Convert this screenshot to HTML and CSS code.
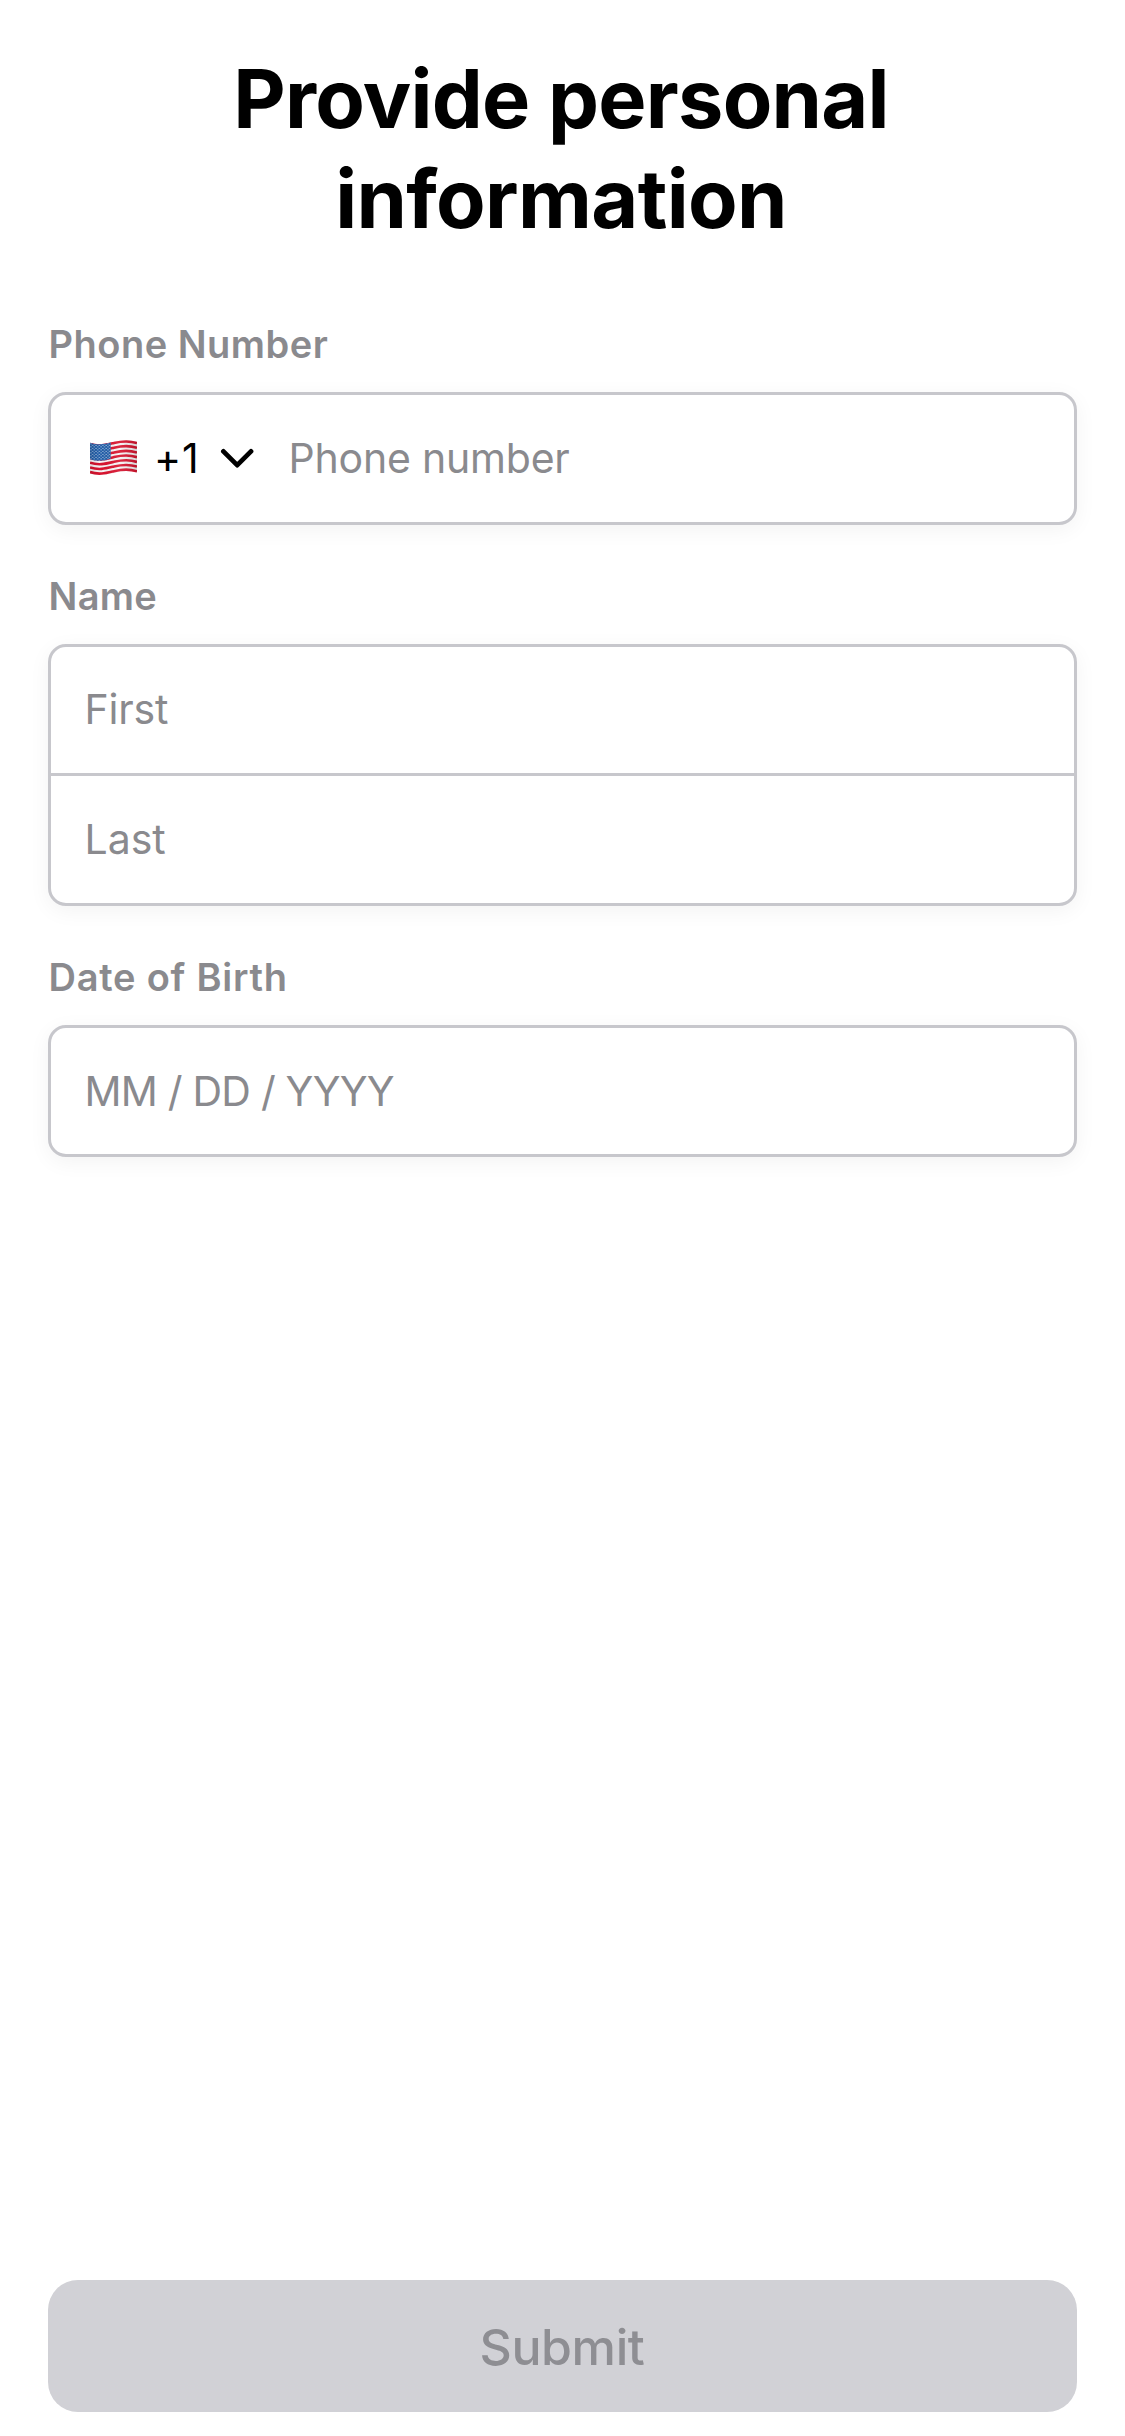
FILE: index.html
```html
<!DOCTYPE html>
<html lang="en">
<head>
<meta charset="utf-8">
<title>Provide personal information</title>
<link rel="stylesheet" href="styles.css">
</head>
<body>
<main class="screen">
  <h1 class="title"><span class="title-wide">Provide personal</span><br>information</h1>

  <section class="group">
    <div class="label label-phone">Phone Number</div>
    <div class="box">
      <div class="row row-phone">
        <svg class="flag" width="47" height="36" viewBox="0 0 47 36" aria-hidden="true">
          <defs>
            <path id="wave" d="M0 0C9 3 16 1 24 -.9S39 -3.4 47 -.8"/>
            <pattern id="stars" width="3.4" height="3" patternUnits="userSpaceOnUse">
              <circle cx=".9" cy=".8" r=".62" fill="#c3d7ec"/>
              <circle cx="2.6" cy="2.3" r=".62" fill="#c3d7ec"/>
            </pattern>
            <linearGradient id="shade" x1="0" y1="0" x2="1" y2="0">
              <stop offset="0" stop-color="#000" stop-opacity=".1"/>
              <stop offset=".22" stop-color="#000" stop-opacity="0"/>
              <stop offset=".6" stop-color="#fff" stop-opacity=".08"/>
              <stop offset="1" stop-color="#000" stop-opacity=".14"/>
            </linearGradient>
          </defs>
          <path d="M0 2.7C9 5.7 16 3.7 24 1.8S39 -.7 47 1.9V32.6C39 30 32 31.1 24 33S9 36.4 0 33.4Z" fill="#f6f3f4"/>
          <g fill="none" stroke="#d8142f" stroke-width="2.6">
            <use href="#wave" y="3.9"/>
            <use href="#wave" y="8.6"/>
            <use href="#wave" y="13.3"/>
            <use href="#wave" y="18"/>
            <use href="#wave" y="22.7"/>
            <use href="#wave" y="27.4"/>
            <use href="#wave" y="32.1"/>
          </g>
          <path d="M0 2.7C8 5.2 14 4.2 20.7 2.6V18.7C14 20.8 8 21.7 0 19.2Z" fill="#1f5ba6"/>
          <path d="M0 2.7C8 5.2 14 4.2 20.7 2.6V18.7C14 20.8 8 21.7 0 19.2Z" fill="url(#stars)"/>
          <path d="M0 2.7C9 5.7 16 3.7 24 1.8S39 -.7 47 1.9V32.6C39 30 32 31.1 24 33S9 36.4 0 33.4Z" fill="url(#shade)"/>
        </svg>
        <span class="code">+1</span>
        <svg class="chevron" width="34" height="20" viewBox="0 0 34 20" aria-hidden="true">
          <path d="M3.4 3.4L17.2 17.1L31 3.4"/>
        </svg>
        <span class="hint hint-phone">Phone number</span>
      </div>
    </div>
  </section>

  <section class="group">
    <div class="label label-name">Name</div>
    <div class="box">
      <div class="row row-first"><span class="hint hint-first">First</span></div>
      <div class="row row-last"><span class="hint">Last</span></div>
    </div>
  </section>

  <section class="group">
    <div class="label label-birth">Date of Birth</div>
    <div class="box">
      <div class="row"><span class="hint hint-date">MM / DD / YYYY</span></div>
    </div>
  </section>

  <button class="submit" type="button" disabled>Submit</button>
</main>
</body>
</html>
```
FILE: styles.css
```css
* {
  box-sizing: border-box;
}

body {
  margin: 0;
  background: #fff;
  font-family: Inter, "Liberation Sans", sans-serif;
}

.screen {
  display: flex;
  flex-direction: column;
  height: 2436px;
  padding: 49px 48px 24px;
}

.title {
  margin: 0 0 24px;
  padding-right: 3px;
  color: #000;
  font-size: 81px;
  font-weight: 700;
  line-height: 100px;
  letter-spacing: -0.65px;
  text-align: center;
}

.title-wide {
  letter-spacing: -0.75px;
}

.group {
  padding-top: 47px;
}

.label {
  height: 72px;
  padding-left: 0.5px;
  color: #8a8a8e;
  font-size: 38px;
  font-weight: 600;
  line-height: 48px;
}

.label-phone { letter-spacing: 0.5px; }
.label-name { letter-spacing: 0.3px; }
.label-birth { letter-spacing: 0.76px; }

.box {
  border: 3px solid #c7c7cc;
  border-radius: 18px;
  background: #fff;
  box-shadow: 0 5px 21px rgba(0, 0, 0, 0.05);
}

.row {
  display: flex;
  align-items: center;
  height: 126px;
  padding-left: 33.5px;
  font-size: 41px;
  line-height: 50px;
}

.row-phone {
  height: 127px;
  padding-left: 39px;
  padding-bottom: 1px;
}

.row-first {
  padding-bottom: 2px;
}

.row-last {
  height: 130px;
  padding-bottom: 1px;
  border-top: 3px solid #c7c7cc;
}

.flag {
  margin-right: 17px;
}

.code {
  width: 66px;
  color: #000;
  letter-spacing: 0.9px;
}

.chevron {
  margin-right: 34.5px;
  fill: none;
  stroke: #000;
  stroke-width: 4.8;
  stroke-linecap: round;
  stroke-linejoin: round;
}

.hint {
  color: #8a8a8e;
}

.hint-phone { letter-spacing: -0.2px; }
.hint-first { letter-spacing: -0.2px; }
.hint-date { letter-spacing: -0.78px; }

.submit {
  height: 132px;
  margin-top: auto;
  padding: 2px 1px 0 0;
  border: 0;
  border-radius: 30px;
  background: #d1d1d6;
  color: #8e8e93;
  font-family: inherit;
  font-size: 50px;
  font-weight: 500;
  line-height: 60px;
  letter-spacing: -0.4px;
}
```
